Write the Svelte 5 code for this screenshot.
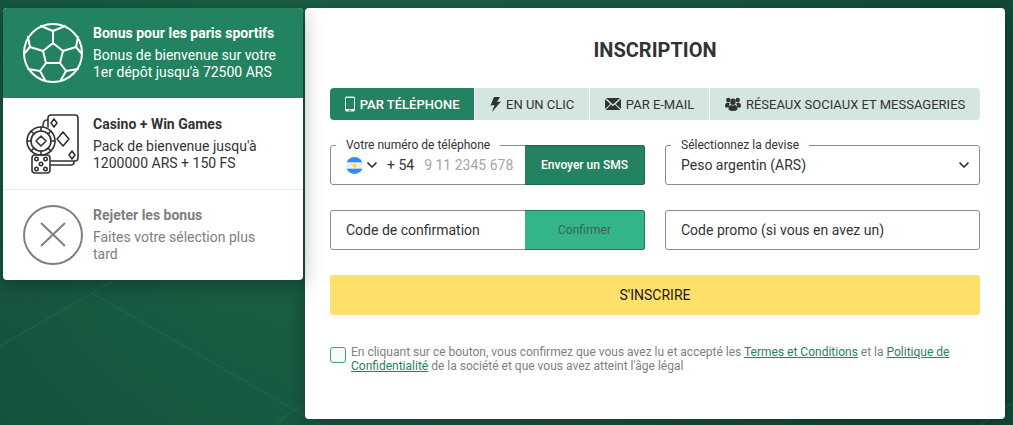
<script>
  const bonuses = [
    { id: 'sport', title: 'Bonus pour les paris sportifs', text: "Bonus de bienvenue sur votre 1er dépôt jusqu'à 72500 ARS" },
    { id: 'casino', title: 'Casino + Win Games', text: "Pack de bienvenue jusqu'à 1200000 ARS + 150 FS" },
    { id: 'reject', title: 'Rejeter les bonus', text: 'Faites votre sélection plus tard' }
  ];
  const tabs = [
    { id: 'phone', label: 'PAR TÉLÉPHONE' },
    { id: 'click', label: 'EN UN CLIC' },
    { id: 'mail', label: 'PAR E-MAIL' },
    { id: 'social', label: 'RÉSEAUX SOCIAUX ET MESSAGERIES' }
  ];
  let bonus = $state('sport');
  let tab = $state('phone');
</script>

<div class="page">
  <svg class="lines" aria-hidden="true">
    <path d="M0 346 L92 293 L140 265 M92 293 L340 436 M275 425 Q288 412 310 402 M975 430 Q990 417 1013 403" />
  </svg>

  <aside class="bonuses">
    {#each bonuses as item}
      <button type="button" class="bonus {item.id}" class:active={bonus === item.id} aria-pressed={bonus === item.id} onclick={() => (bonus = item.id)}>
        <svg class="pic" viewBox="0 0 60 60" fill="none" stroke="currentColor" stroke-width="2" stroke-linejoin="round" stroke-linecap="round" aria-hidden="true">
          {#if item.id === 'sport'}
            <circle cx="30" cy="30" r="29" />
            <path d="M30 20 L40 28 L37 40 H23 L20 28 Z M30 20 V8 M18 3 L30 8 L42 3 M40 28 L53 24 M55 14 L53 24 L59 31 M37 40 L43 48 M55 46 L43 48 L38 57 M23 40 L17 48 M5 46 L17 48 L22 57 M20 28 L7 24 M5 14 L7 24 L1 31" />
          {:else if item.id === 'casino'}
            <g stroke-width="1.6">
              <path d="M25 13 V4 Q25 1 28 1 H52 Q55 1 55 4 V44 Q55 47 52 47 H28 M24 6 Q20 6 20 12 M28 51 H48 Q51 51 51 48" />
              <path d="M31 5 L34 9 L31 13 L28 9 Z M40 18 L46 25 L40 32 L34 25 Z M49 37 L52 41 L49 45 L46 41 Z M18 22 L23 27 L18 32 L13 27 Z" />
              <circle cx="18" cy="27" r="14" />
              <circle cx="18" cy="27" r="10" />
              <path d="M18 13 V17 M4 27 H8 M28 27 H32 M8 17 L11 20 M28 17 L25 20 M8 37 L11 34 M28 37 L25 34 M18 37 V41" />
              <rect x="9" y="41" width="18" height="18" rx="3" />
              <circle cx="13.500" cy="45" r="1.700" /><circle cx="22.500" cy="45" r="1.700" /><circle cx="18" cy="50" r="1.700" /><circle cx="13.500" cy="55" r="1.700" /><circle cx="22.500" cy="55" r="1.700" />
            </g>
          {:else}
            <circle cx="30" cy="30" r="29" />
            <path stroke-linecap="butt" d="M18 18 L42 41 M42 18 L18 41" />
          {/if}
        </svg>
        <span class="copy"><strong>{item.title}</strong><span>{item.text}</span></span>
      </button>
    {/each}
  </aside>

  <main class="panel">
    <h1>INSCRIPTION</h1>
    <div class="tabs">
      {#each tabs as t}
        <button type="button" class="tab" class:active={tab === t.id} aria-pressed={tab === t.id} onclick={() => (tab = t.id)}>
          {#if t.id === 'phone'}
            <svg width="10" height="16" viewBox="0 0 10 16" aria-hidden="true"><path fill="currentColor" fill-opacity="0.9" fill-rule="evenodd" d="M1.500 0.500 H8.500 Q10 0.500 10 2 V14 Q10 15.500 8.500 15.500 H1.500 Q0 15.500 0 14 V2 Q0 0.500 1.500 0.500 Z M1 2 V13 H9 V2 Z M4 13.700 V14.700 H6 V13.700 Z" /></svg>
          {:else if t.id === 'click'}
            <svg width="11" height="16" viewBox="0 0 11 16" aria-hidden="true"><path fill="currentColor" d="M4 1 H10 L7 6 L11 5.500 L2 16 L4.500 9 L0.500 9.500 Z" /></svg>
          {:else if t.id === 'mail'}
            <svg width="16" height="12" viewBox="0 0 16 12" aria-hidden="true"><path fill="currentColor" d="M1 0 H15 L8 6.500 Z M0 1 L5.300 6 L0 11 Z M16 1 L10.700 6 L16 11 Z M6 6.600 L8 8.200 L10 6.600 L15.300 12 H0.700 Z" /></svg>
          {:else}
            <svg width="16" height="14" viewBox="0 0 16 14" aria-hidden="true"><g fill="currentColor"><circle cx="3.300" cy="3" r="2.200" /><circle cx="12.700" cy="3" r="2.200" /><path d="M0 9.500 Q0 5.500 3 5.500 L5 6.500 Q3.500 8 4 10.500 H0.500 Z M16 9.500 Q16 5.500 13 5.500 L11 6.500 Q12.500 8 12 10.500 H15.500 Z" /><ellipse cx="8" cy="4.800" rx="2.700" ry="3.200" /><path d="M3.500 12.500 Q3.500 8 6.300 8 Q8 9.200 9.700 8 Q12.500 8 12.500 12.500 Q11 14 8 14 Q5 14 3.500 12.500 Z" /></g></svg>
          {/if}
          {t.label}
        </button>
      {/each}
    </div>

    <form onsubmit={(e) => e.preventDefault()}>
      <div class="field">
        <label class="caption" for="phone">Votre numéro de téléphone</label>
        <button type="button" class="country" aria-label="Argentine">
          <svg width="17" height="17" viewBox="0 0 16 16" aria-hidden="true"><clipPath id="flag"><circle cx="8" cy="8" r="8" /></clipPath><g clip-path="url(#flag)"><rect width="16" height="16" fill="#f0f0f0" /><rect width="16" height="5" fill="#338af3" /><rect y="11" width="16" height="5" fill="#338af3" /><circle cx="8" cy="8" r="2" fill="#ffda44" /></g></svg>
          <svg width="10" height="6" viewBox="0 0 10 6" fill="none" stroke="#333" stroke-width="1.600" aria-hidden="true"><path d="M0.500 0.500 L5 5 L9.500 0.500" /></svg>
        </button>
        <span class="prefix">+ 54</span>
        <input id="phone" class="tel" type="tel" placeholder="9 11 2345 678" />
        <button type="button" class="side send">Envoyer un SMS</button>
      </div>
      <div class="field">
        <label class="caption" for="currency">Sélectionnez la devise</label>
        <select id="currency"><option>Peso argentin (ARS)</option></select>
        <svg class="arrow" width="10" height="6" viewBox="0 0 10 6" fill="none" stroke="#333" stroke-width="1.600" aria-hidden="true"><path d="M0.500 0.500 L5 5 L9.500 0.500" /></svg>
      </div>
      <div class="field">
        <input class="text" type="text" placeholder="Code de confirmation" aria-label="Code de confirmation" />
        <button type="button" class="side confirm">Confirmer</button>
      </div>
      <div class="field">
        <input class="text" type="text" placeholder="Code promo (si vous en avez un)" aria-label="Code promo (si vous en avez un)" />
      </div>
      <button type="submit" class="submit">S'INSCRIRE</button>
      <div class="terms">
        <input id="agree" type="checkbox" />
        <label for="agree">En cliquant sur ce bouton, vous confirmez que vous avez lu et accepté les <a href="#terms">Termes et Conditions</a> et la <a href="#privacy">Politique de Confidentialité</a> de la société et que vous avez atteint l'âge légal</label>
      </div>
    </form>
  </main>
</div>

<style>
  :global(body) { margin: 0; background: #144c37; }
  .page, .page * { box-sizing: border-box; }
  .page {
    position: relative;
    display: grid;
    grid-template-columns: 300px minmax(0, 1fr);
    align-items: start;
    gap: 2px;
    min-height: 100vh;
    padding: 8px 8px 6px 3px;
    overflow: hidden;
    background: radial-gradient(ellipse 640px 620px at 350px 130px, #1b6446, #185a41 45%, #124a35);
    font: 14px/17px Roboto, sans-serif;
    color: #333;
  }
  .lines { position: absolute; inset: 0; width: 100%; height: 100%; fill: none; stroke: #23704f; stroke-opacity: 0.7; }
  button, input, select { font: inherit; color: inherit; margin: 0; border: 0; background: none; }
  button { cursor: pointer; }
  svg { flex: none; }

  .bonuses { position: relative; z-index: 2; border-radius: 4px; overflow: hidden; background: #fff; box-shadow: 0 5px 20px rgba(0, 0, 0, 0.3); }
  .bonus { display: flex; align-items: center; gap: 10px; width: 100%; padding: 15px 20px; text-align: left; }
  .bonus + .bonus { border-top: 1px solid #e1edea; }
  .bonus.active { background: #238360; color: #fff; }
  .bonus.active + .bonus { border-top-color: #fff; }
  .reject { color: #808080; }
  .pic { width: 60px; height: 60px; }
  .copy { display: flex; flex-direction: column; gap: 5px; }
  .copy strong { font-weight: 700; }

  .panel { position: relative; padding: 30px 25px 46px; border-radius: 4px; background: #fff; box-shadow: 0 5px 20px rgba(0, 0, 0, 0.3); }
  h1 { margin: 0 0 26px; font-size: 20px; line-height: 24px; font-weight: 700; text-align: center; }
  .tabs { display: flex; gap: 1px; border-radius: 4px; overflow: hidden; }
  .tab { display: flex; flex: 1 0 auto; align-items: center; justify-content: center; gap: 5px; height: 32px; padding: 0 14px; background: #d3e6df; font-size: 13px; }
  .tab.active { background: #238360; color: #fff; font-weight: 500; }

  form { display: grid; grid-template-columns: repeat(2, minmax(0, 1fr)); gap: 25px 20px; padding-top: 25px; }
  .field { position: relative; display: flex; align-items: center; height: 40px; border: 1px solid #8c8c8c; border-radius: 3px; }
  .caption { position: absolute; top: -9px; left: 5px; padding: 0 10px; background: #fff; font-size: 12px; line-height: 16px; }
  .country { display: flex; align-items: center; gap: 4px; padding: 0 10px 0 15px; }
  .tel { flex: 1; min-width: 0; height: 100%; padding: 0 10px; outline: 0; }
  .tel::placeholder { color: #a6a6a6; opacity: 1; }
  .side { align-self: stretch; flex: none; width: 120px; margin: -1px; border: 1px solid #1d684d; border-left: 0; border-radius: 0 3px 3px 0; font-size: 12px; }
  .send { background: #238360; color: #fff; font-weight: 500; }
  .confirm { background: #33b588; border-color: #25775b; color: #3b6656; }
  select { appearance: none; width: 100%; height: 100%; padding: 0 30px 0 15px; outline: 0; }
  .arrow { position: absolute; right: 10px; top: 16px; pointer-events: none; }
  .text { flex: 1; min-width: 0; height: 100%; padding: 0 15px; outline: 0; }
  .text::placeholder { color: #333; opacity: 1; }
  .submit { grid-column: 1 / -1; height: 40px; border-radius: 3px; background: #ffe06b; color: #1a1a1a; }
  .terms { grid-column: 1 / -1; display: flex; align-items: flex-start; gap: 5px; padding-top: 5px; font-size: 12px; line-height: 14px; color: #808080; }
  .terms input { appearance: none; flex: none; width: 16px; height: 16px; margin-top: 2px; border: 1px solid #4f9980; border-radius: 3px; background: #f2fdf9; }
  .terms input:checked { background: #238360; }
  .terms a { color: #238360; }
</style>
